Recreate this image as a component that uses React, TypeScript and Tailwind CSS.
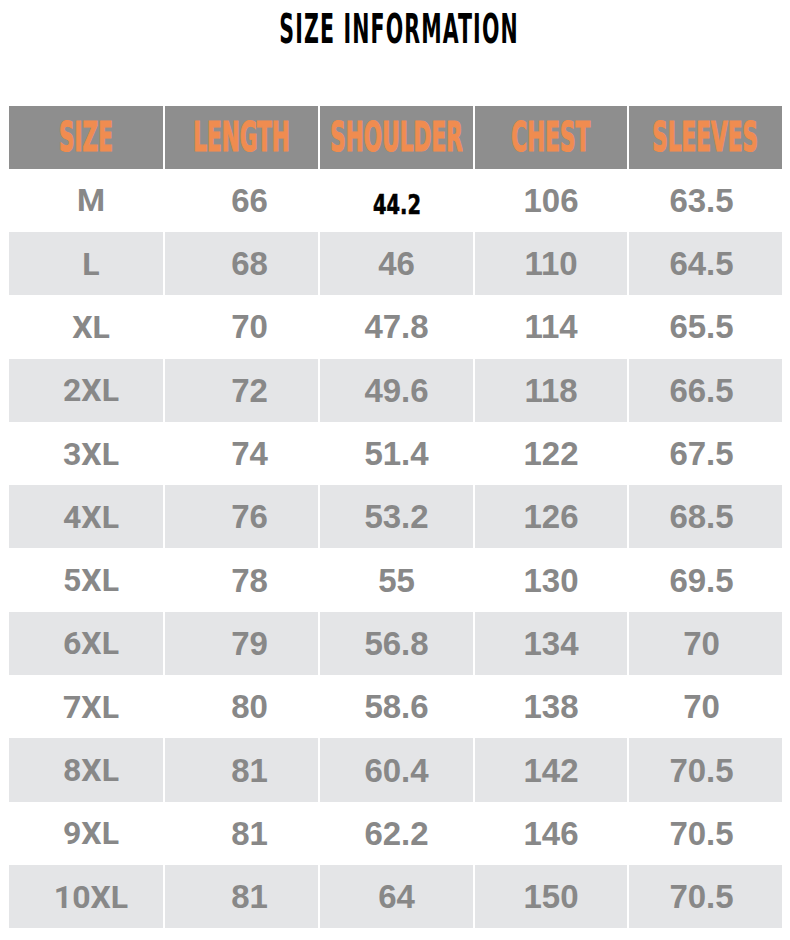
import React from "react";

const rows: [string, string, string, string, string][] = [
  ["M", "66", "44.2", "106", "63.5"],
  ["L", "68", "46", "110", "64.5"],
  ["XL", "70", "47.8", "114", "65.5"],
  ["2XL", "72", "49.6", "118", "66.5"],
  ["3XL", "74", "51.4", "122", "67.5"],
  ["4XL", "76", "53.2", "126", "68.5"],
  ["5XL", "78", "55", "130", "69.5"],
  ["6XL", "79", "56.8", "134", "70"],
  ["7XL", "80", "58.6", "138", "70"],
  ["8XL", "81", "60.4", "142", "70.5"],
  ["9XL", "81", "62.2", "146", "70.5"],
  ["10XL", "81", "64", "150", "70.5"],
];

const headers = ["SIZE", "LENGTH", "SHOULDER", "CHEST", "SLEEVES"];

export default function App() {
  return (
    <div className="w-[790px] h-[940px] bg-white overflow-hidden">
      <div className="h-[106px] flex justify-center pt-[9px] pl-[8px]">
        <span
          className="inline-block text-[40px] leading-none font-bold text-black tracking-[2px] scale-x-[0.57] whitespace-nowrap"
          style={{ fontFamily: '"DejaVu Sans Condensed", "DejaVu Sans", sans-serif' }}
        >
          SIZE INFORMATION
        </span>
      </div>
      <div className="ml-[9px] w-[773px]">
        <div className="grid grid-cols-[154px_153px_153px_152px_153px] gap-x-[2px] h-[62.7px]">
          {headers.map((h) => (
            <div key={h} className="bg-[#8e8e8e] flex items-center justify-center overflow-visible">
              <span
                className="inline-block text-[40px] leading-none font-bold text-[#f08c50] scale-x-[0.6] whitespace-nowrap [-webkit-text-stroke:1.2px_#f08c50]"
                style={{ fontFamily: '"DejaVu Sans Condensed", "DejaVu Sans", sans-serif' }}
              >
                {h}
              </span>
            </div>
          ))}
        </div>
        {rows.map((r, i) => {
          const bg = i % 2 === 1 ? "bg-[#e4e5e7]" : "bg-white";
          return (
            <div
              key={r[0]}
              className="grid grid-cols-[154px_153px_153px_152px_153px] gap-x-[2px] h-[63.3px]"
            >
              <div className={`${bg} flex items-center justify-center pl-[10px]`}>
                <span
                  className="text-[32px] leading-none font-bold text-[#888888]"
                  style={{ fontFamily: 'Roboto, "Liberation Sans", sans-serif' }}
                >
                  {r[0]}
                </span>
              </div>
              <div className={`${bg} flex items-center justify-center pl-4`}>
                <span
                  className="text-[33px] leading-none font-bold text-[#888888]"
                  style={{ fontFamily: '"Liberation Sans", sans-serif' }}
                >
                  {r[1]}
                </span>
              </div>
              <div className={`${bg} flex items-center justify-center`}>
                {i === 0 ? (
                  <span
                    className="inline-block mt-[9px] text-[27px] leading-none font-bold text-black scale-x-[0.8] [-webkit-text-stroke:0.6px_#000]"
                    style={{ fontFamily: '"DejaVu Sans Condensed", "DejaVu Sans", sans-serif' }}
                  >
                    {r[2]}
                  </span>
                ) : (
                  <span
                    className="text-[33px] leading-none font-bold text-[#888888]"
                    style={{ fontFamily: '"Liberation Sans", sans-serif' }}
                  >
                    {r[2]}
                  </span>
                )}
              </div>
              <div className={`${bg} flex items-center justify-center`}>
                <span
                  className="text-[33px] leading-none font-bold text-[#888888]"
                  style={{ fontFamily: '"Liberation Sans", sans-serif' }}
                >
                  {r[3]}
                </span>
              </div>
              <div className={`${bg} flex items-center justify-center pr-2`}>
                <span
                  className="text-[33px] leading-none font-bold text-[#888888]"
                  style={{ fontFamily: '"Liberation Sans", sans-serif' }}
                >
                  {r[4]}
                </span>
              </div>
            </div>
          );
        })}
      </div>
    </div>
  );
}
